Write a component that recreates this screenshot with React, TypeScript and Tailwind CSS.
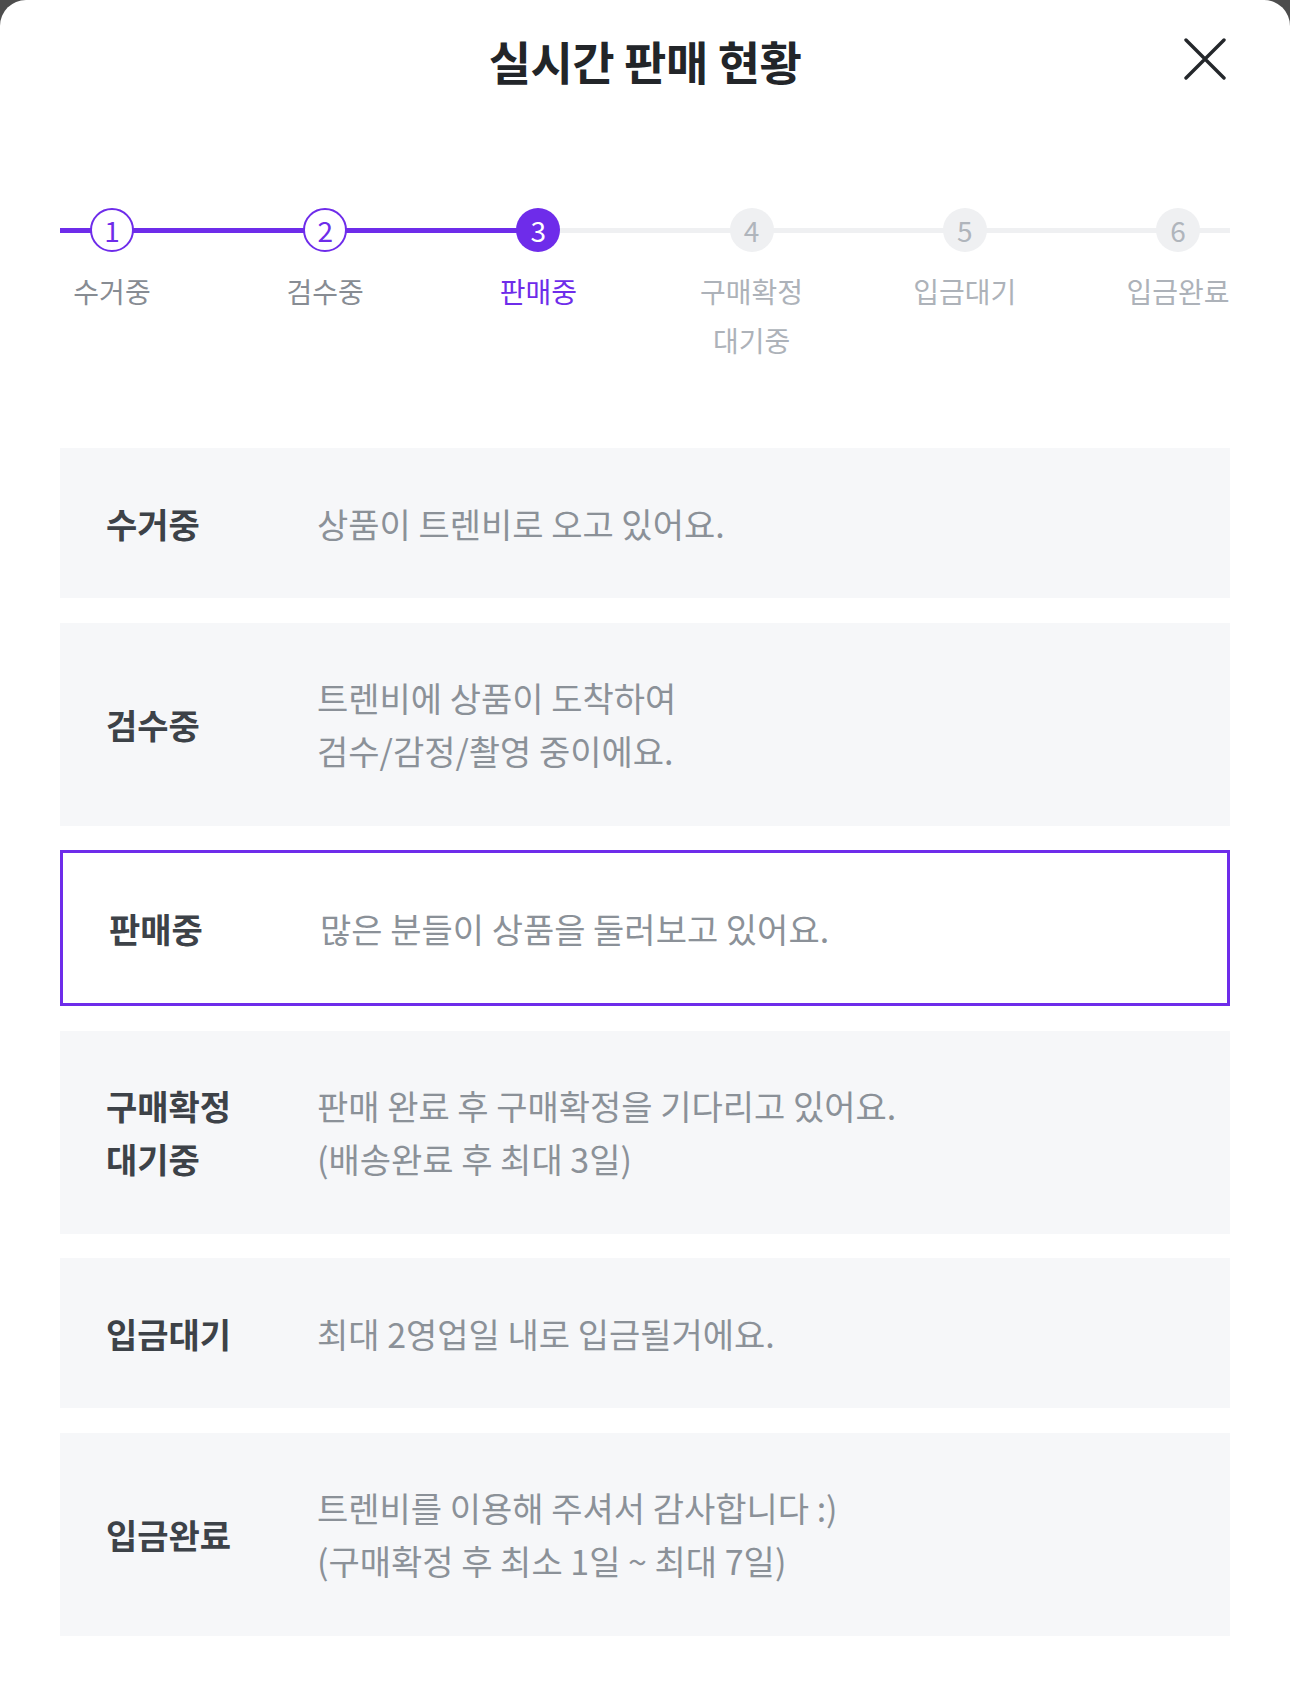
import React from "react";

type Step = { n: number; label: string[]; state: "done" | "current" | "todo" };

const steps: Step[] = [
  { n: 1, label: ["수거중"], state: "done" },
  { n: 2, label: ["검수중"], state: "done" },
  { n: 3, label: ["판매중"], state: "current" },
  { n: 4, label: ["구매확정", "대기중"], state: "todo" },
  { n: 5, label: ["입금대기"], state: "todo" },
  { n: 6, label: ["입금완료"], state: "todo" },
];

const cards: { title: string[]; desc: string[]; active?: boolean }[] = [
  { title: ["수거중"], desc: ["상품이 트렌비로 오고 있어요."] },
  { title: ["검수중"], desc: ["트렌비에 상품이 도착하여", "검수/감정/촬영 중이에요."] },
  { title: ["판매중"], desc: ["많은 분들이 상품을 둘러보고 있어요."], active: true },
  { title: ["구매확정", "대기중"], desc: ["판매 완료 후 구매확정을 기다리고 있어요.", "(배송완료 후 최대 3일)"] },
  { title: ["입금대기"], desc: ["최대 2영업일 내로 입금될거에요."] },
  { title: ["입금완료"], desc: ["트렌비를 이용해 주셔서 감사합니다 :)", "(구매확정 후 최소 1일 ~ 최대 7일)"] },
];

function Circle({ step }: { step: Step }) {
  if (step.state === "done") {
    return (
      <div className="w-[44px] h-[44px] rounded-full bg-white border-[2.5px] border-[#6e2cea] flex items-center justify-center text-[#6e2cea] text-[28px] leading-none">
        {step.n}
      </div>
    );
  }
  if (step.state === "current") {
    return (
      <div className="w-[44px] h-[44px] rounded-full bg-[#6e2cea] flex items-center justify-center text-white text-[28px] leading-none">
        {step.n}
      </div>
    );
  }
  return (
    <div className="w-[44px] h-[44px] rounded-full bg-[#eff0f2] flex items-center justify-center text-[#b0b5bc] text-[28px] leading-none">
      {step.n}
    </div>
  );
}

export default function App() {
  return (
    <div
      className="bg-[#4d4d4d] min-h-[1703px] w-full"
      style={{ fontFamily: '"Noto Sans CJK KR", "Noto Sans", sans-serif' }}
    >
      <div className="bg-white rounded-t-[26px] min-h-[1703px] w-full flex flex-col">
        {/* Header */}
        <div className="relative h-[120px] flex items-center justify-center">
          <h1 className="text-[46px] font-bold text-[#222529] leading-none tracking-[-0.5px]">
            실시간 판매 현황
          </h1>
          <button className="absolute right-[64px] top-[38px] w-[42px] h-[42px] flex items-center justify-center">
            <svg width="42" height="42" viewBox="0 0 42 42" fill="none">
              <path d="M2 2 L40 40 M40 2 L2 40" stroke="#24272b" strokeWidth="3.4" strokeLinecap="round" />
            </svg>
          </button>
        </div>

        {/* Stepper */}
        <div className="mt-[88px] px-[60px]">
          <div className="relative">
            <div className="absolute left-0 right-0 top-[19.5px] h-[5px] bg-[#eff0f2]" />
            <div className="absolute left-0 w-[478px] top-[19.5px] h-[5px] bg-[#6e2cea]" />
            <div className="relative flex justify-between items-start">
              {steps.map((s) => (
                <div key={s.n} className="w-[104px] flex flex-col items-center">
                  <Circle step={s} />
                  <div
                    className={
                      "mt-[15px] text-[28px] leading-[49px] text-center whitespace-nowrap " +
                      (s.state === "done"
                        ? "text-[#878c93]"
                        : s.state === "current"
                        ? "text-[#6e2cea]"
                        : "text-[#adb2b9]")
                    }
                  >
                    {s.label.map((l, i) => (
                      <div key={i}>{l}</div>
                    ))}
                  </div>
                </div>
              ))}
            </div>
          </div>
        </div>

        {/* Cards */}
        <div className="mt-[83px] px-[60px] flex flex-col gap-[24.5px]">
          {cards.map((c, idx) => (
            <div
              key={idx}
              className={
                "flex items-center px-[46px] py-[48.5px] " +
                (c.active ? "bg-white border-[3px] border-[#6e2cea]" : "bg-[#f6f7f9]")
              }
            >
              <div className="w-[211px] shrink-0 text-[34px] leading-[53px] font-bold text-[#3d4248] whitespace-nowrap">
                {c.title.map((t, i) => (
                  <div key={i}>{t}</div>
                ))}
              </div>
              <div className="text-[34px] leading-[53px] text-[#8b9198] whitespace-nowrap">
                {c.desc.map((t, i) => (
                  <div key={i}>{t}</div>
                ))}
              </div>
            </div>
          ))}
        </div>
      </div>
    </div>
  );
}
